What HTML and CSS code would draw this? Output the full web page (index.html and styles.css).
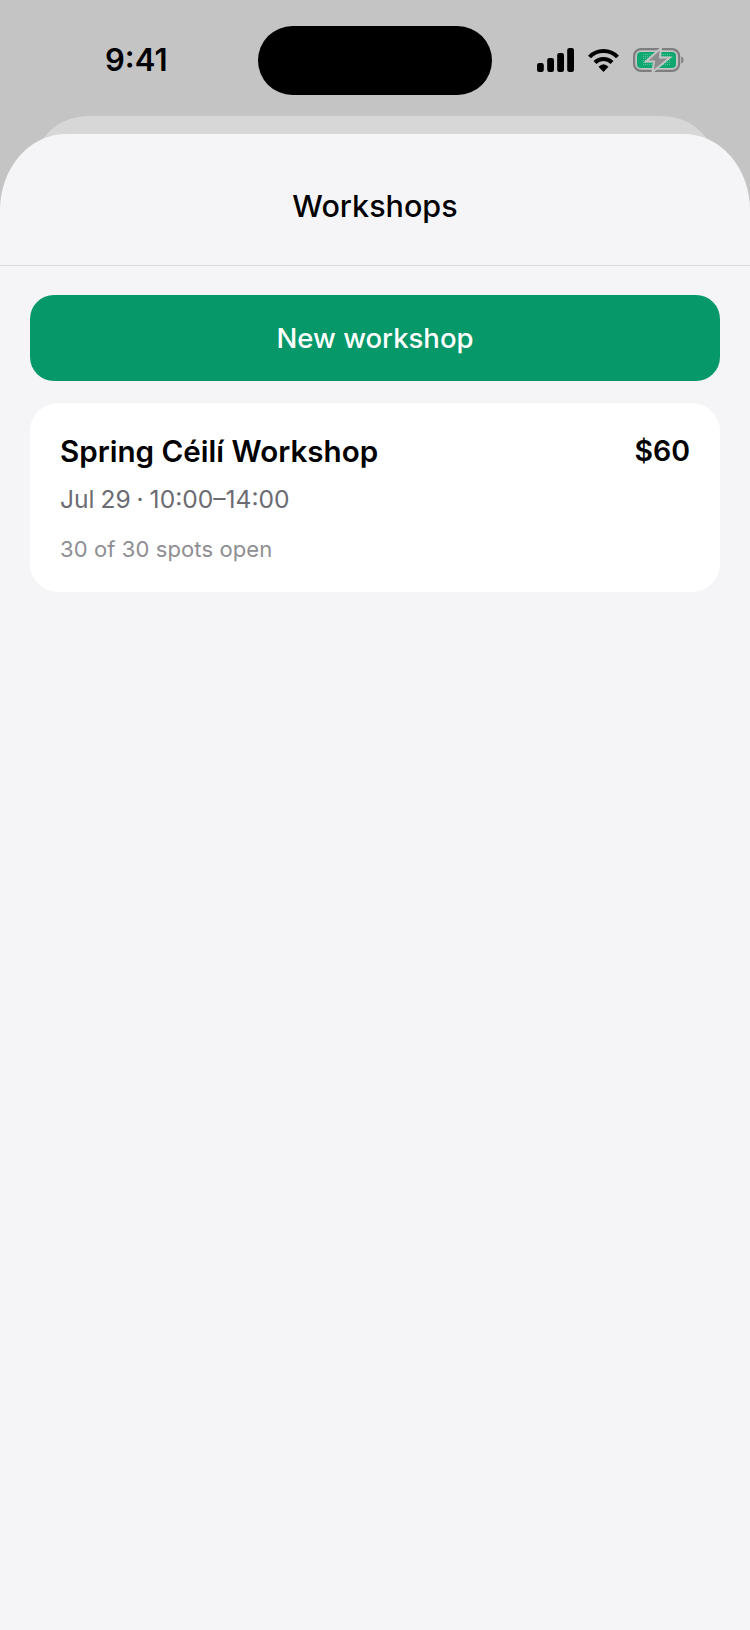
FILE: index.html
```html
<!DOCTYPE html>
<html lang="en">
<head>
<meta charset="utf-8">
<title>Workshops</title>
<link rel="stylesheet" href="styles.css">
</head>
<body>
<div class="phone">
  <div class="statusbar">
    <span class="time">9:41</span>
    <div class="status-icons">
      <svg width="37" height="24" viewBox="0 0 37 24"><rect x="0" y="15" width="6.800" height="9" rx="2.200"/><rect x="10.200" y="10" width="6.800" height="14" rx="2.200"/><rect x="20.200" y="5" width="6.800" height="19" rx="2.200"/><rect x="30.200" y="0" width="6.800" height="24" rx="2.200"/></svg>
      <svg width="31" height="24" viewBox="0 0 31 24"><path d="M1.500 9C9 1 22 1 29.500 9" fill="none" stroke="#000" stroke-width="4"/><path d="M7 14.500C11.500 9.800 19.500 9.800 24 14.500" fill="none" stroke="#000" stroke-width="4"/><path d="M10.500 18.800Q15.500 13.800 20.500 18.800L15.500 24z"/></svg>
      <svg width="51" height="24" viewBox="0 0 51 24">
        <defs><pattern id="dots" width="2" height="2" patternUnits="userSpaceOnUse"><rect width="2" height="2" fill="#0fa870"/><rect width="1" height="1" fill="#5cc29d"/></pattern></defs>
        <rect x="1.100" y="1.100" width="45" height="21.800" rx="7" fill="none" stroke="#7e7e81" stroke-width="2.200"/>
        <rect x="4" y="4" width="39" height="16" rx="4" fill="#0fa870"/>
        <rect x="10" y="6" width="27" height="12" fill="url(#dots)"/>
        <path d="M48.300 8.500c2.900 .8 2.900 6.200 0 7z" fill="#7e7e81"/>
        <path d="M28 0L13 13.500H21L19.500 24 37 9.500H27z" fill="#8c8c8e" stroke="#c4c4c5" stroke-width="2"/>
      </svg>
    </div>
    <div class="island"></div>
  </div>
  <div class="sheet-back"></div>
  <main class="sheet">
    <header class="sheet-head"><h1>Workshops</h1></header>
    <div class="content">
      <button class="new-btn" type="button">New workshop</button>
      <article class="card">
        <div class="card-top">
          <h2>Spring Céilí Workshop</h2>
          <span class="price">$60</span>
        </div>
        <p class="when">Jul 29 · 10:00–14:00</p>
        <p class="spots">30 of 30 spots open</p>
      </article>
    </div>
  </main>
</div>
</body>
</html>
```
FILE: styles.css
```css
* { box-sizing: border-box; }
html, body { margin: 0; padding: 0; }
body { font-family: Inter, "Liberation Sans", sans-serif; background: #c4c4c5; }
.phone { position: relative; width: 750px; height: 1630px; overflow: hidden; background: #c4c4c5; display: flex; flex-direction: column; }
.statusbar { position: relative; height: 134px; flex: none; display: flex; justify-content: space-between; align-items: flex-start; padding: 42px 66px 0 105px; }
.time { font-size: 31px; line-height: 36px; font-weight: 600; color: #000; }
.status-icons { display: flex; align-items: center; gap: 14px; margin-top: 6px; }
.status-icons svg { display: block; }
.island { position: absolute; left: 258px; top: 26px; width: 234px; height: 69px; border-radius: 35px; background: #000; }
.sheet-back { position: absolute; left: 34px; right: 34px; top: 116px; height: 60px; border-radius: 55px 55px 0 0 / 50px 50px 0 0; background: #d7d7d7; }
.sheet { position: relative; flex: 1; background: #f5f5f7; border-radius: 66px 66px 0 0 / 76px 76px 0 0; }
.sheet-head { height: 132px; padding-top: 12px; border-bottom: 1px solid #d9d9dc; display: flex; align-items: center; justify-content: center; }
.sheet-head h1 { margin: 0; font-size: 30.500px; line-height: 36px; font-weight: 500; color: #000; }
.content { padding: 29px 30px; display: flex; flex-direction: column; gap: 22px; }
.new-btn { display: block; width: 100%; height: 86px; border: 0; border-radius: 24px; background: #069869; color: #fff; font: 500 27.500px/34px Inter, "Liberation Sans", sans-serif; }
.card { background: #fff; border-radius: 28px; height: 189px; padding: 30px; }
.card-top { display: flex; justify-content: space-between; align-items: center; }
.card h2 { margin: 0; font-size: 29.600px; line-height: 36px; font-weight: 600; color: #000; }
.price { font-size: 28.500px; line-height: 36px; font-weight: 600; color: #000; }
.when { margin: 15px 0 0; font-size: 24.600px; line-height: 30px; word-spacing: -1px; color: #6c6c72; }
.spots { margin: 22px 0 0; font-size: 22px; line-height: 26px; letter-spacing: 0.1px; color: #8e8e93; }
```
